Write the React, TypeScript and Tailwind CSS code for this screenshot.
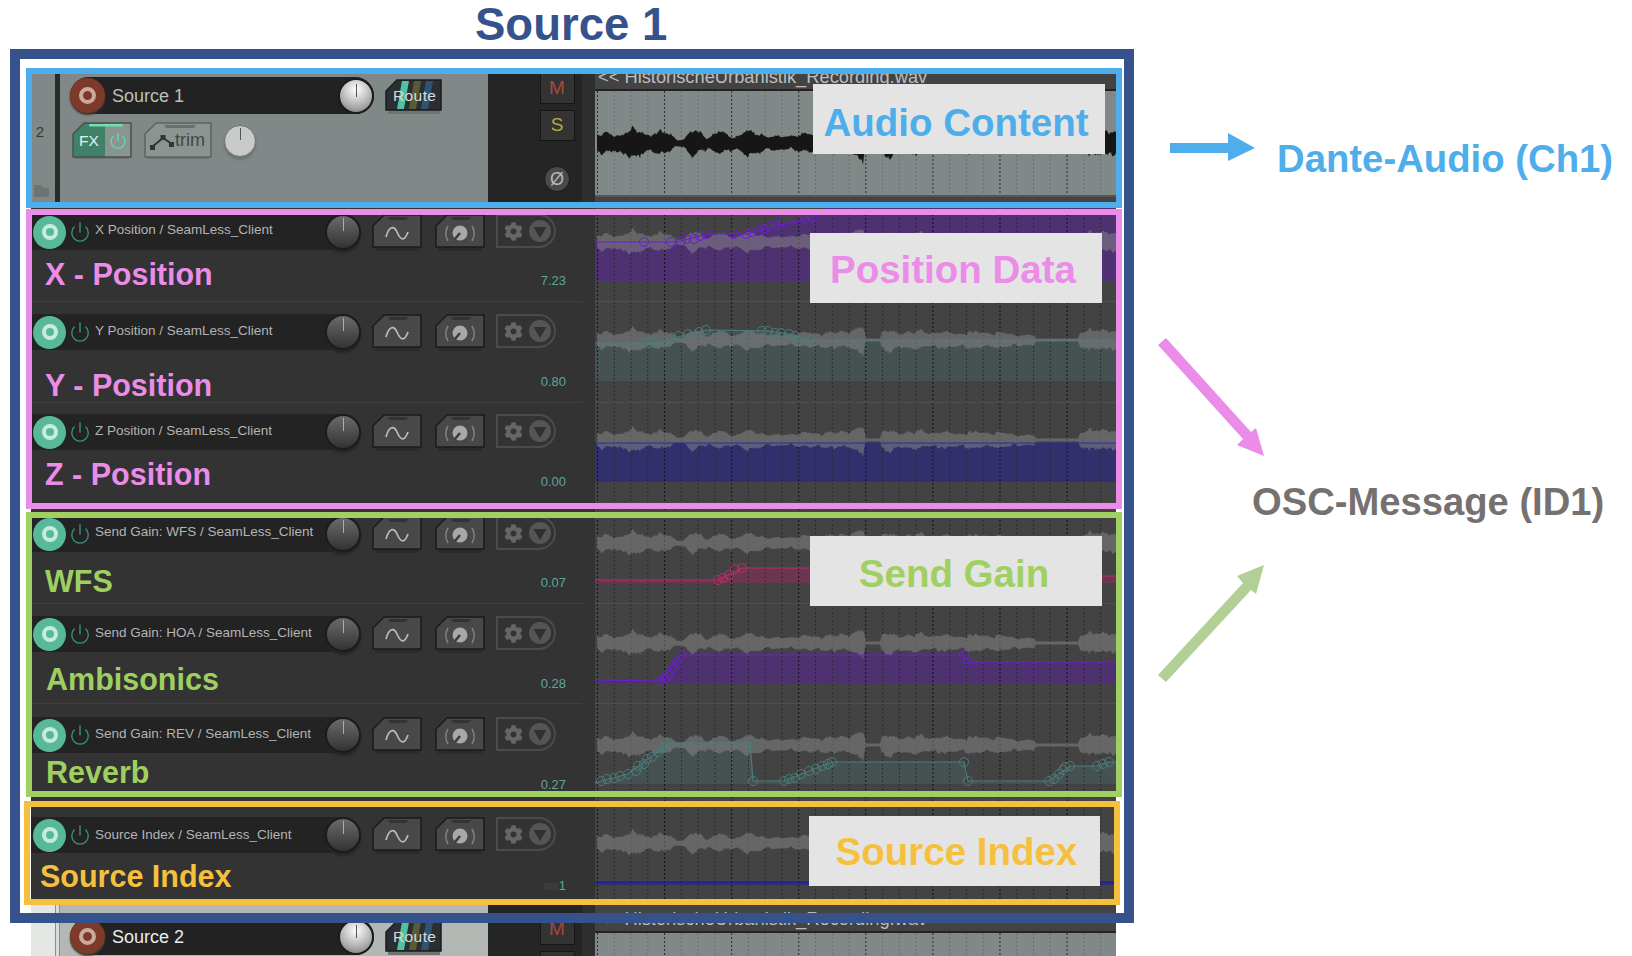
import { Power } from "lucide-react";
import { FaCog } from "react-icons/fa";

type Pt = [number, number];

const ENVELOPE: Pt[] = [
  [597, 7], [620, 9], [640, 11], [650, 7], [660, 9], [672, 7], [677, 3], [684, 3], [692, 11], [703, 9], [708, 4],
  [718, 9], [730, 8], [737, 5], [748, 11], [760, 9], [768, 5], [780, 6], [800, 7], [820, 8], [840, 9], [855, 11],
  [863, 17], [866, 1], [880, 1], [882, 11], [900, 9], [950, 8], [990, 9], [1010, 7], [1025, 6], [1034, 5], [1036, 1],
  [1078, 1], [1080, 8], [1100, 11], [1116, 9],
];

function ampAt(x: number) {
  for (let i = 1; i < ENVELOPE.length; i++) {
    const [x1, a1] = ENVELOPE[i];
    const [x0, a0] = ENVELOPE[i - 1];
    if (x <= x1) return a0 + ((a1 - a0) * (x - x0)) / (x1 - x0);
  }
  return 0;
}

function noise(x: number) {
  const v = Math.sin(x * 12.9898) * 43758.5453;
  return v - Math.floor(v);
}

// jagged look: per pixel noise mixed with a slower wobble
function jag(x: number) {
  const fine = 0.5 * noise(x) + 0.5 * noise(Math.floor(x / 4) * 4 + 7);
  const slow = 0.8 + 0.2 * Math.sin(x * 0.35) * Math.sin(x * 0.13 + 1);
  return (0.55 + 0.45 * fine) * slow;
}

function wavePath(cy: number, scale: number) {
  const top: string[] = [];
  const bottom: string[] = [];
  for (let x = 597; x <= 1116; x += 1) {
    const a = ampAt(x) * scale;
    const silent = a < 2;
    const up = silent ? a : a * jag(x);
    const down = silent ? a : a * jag(x + 31);
    top.push(`${x},${(cy - up).toFixed(1)}`);
    bottom.unshift(`${x},${(cy + down).toFixed(1)}`);
  }
  return `M${top.join(" L")} L${bottom.join(" L")} Z`;
}

const gridXs = Array.from({ length: 31 }, (_, i) => 597.5 + i * 16.77);

function Grid({ y1, y2, light }: { y1: number; y2: number; light?: boolean }) {
  return (
    <g strokeDasharray="2 2">
      {gridXs.map((x, i) => (
        <line
          key={i}
          x1={x}
          x2={x}
          y1={y1}
          y2={y2}
          stroke={i % 4 === 0 ? (light ? "#2a2a2a" : "#141414") : light ? "#696f6e" : "#2c2c2c"}
        />
      ))}
    </g>
  );
}

type LaneProps = {
  top: number;
  height: number;
  cy: number;
  line: Pt[];
  dots?: Pt[];
  stroke: string;
  fill: string;
  fillTo: number;
};

function AutomationLane({ top, height, cy, line, dots = [], stroke, fill, fillTo }: LaneProps) {
  const pts = line.map((p) => p.join(",")).join(" ");
  return (
    <svg width={521} height={height} viewBox={`595 ${top} 521 ${height}`} className="block shrink-0 bg-[#434343]">
      <polygon points={`${pts} 1116,${fillTo} 595,${fillTo}`} fill={fill} />
      <Grid y1={top} y2={top + height} />
      <path d={wavePath(cy, 1.4)} fill="#8a8a8a" opacity={0.5} />
      <line x1={595} x2={1116} y1={top + height - 0.5} y2={top + height - 0.5} stroke="#505050" />
      <polyline points={pts} fill="none" stroke={stroke} strokeWidth={1.2} />
      {dots.map(([x, y], i) => (
        <circle key={i} cx={x} cy={y} r={4.5} fill="none" stroke={stroke} strokeWidth={1} />
      ))}
    </svg>
  );
}

function AudioLane({ top, height }: { top: number; height: number }) {
  const shift = top > 500 ? 842 : 0;
  return (
    <svg width={521} height={height} viewBox={`595 ${top} 521 ${height}`} className="block shrink-0 bg-[#434343]">
      <text x={598} y={83 + shift} fontSize={18.3} fill="#bdbdbd" fontFamily="'Liberation Sans', sans-serif">
        {"<< HistorischeUrbanistik_Recording.wav"}
      </text>
      <rect x={595} y={89 + shift} width={521} height={2} fill="#222" />
      <rect x={595} y={91 + shift} width={521} height={104} fill="#808987" />
      <Grid y1={91 + shift} y2={195 + shift} light />
      <path d={wavePath(143, 1.75)} fill="#161616" />
      <rect x={595} y={195} width={521} height={2} fill="#555" />
    </svg>
  );
}

function Chamfer({ w, h, fill, stroke }: { w: number; h: number; fill: string; stroke: string }) {
  return (
    <polygon
      points={`1,${h - 1} 1,12 12,1 ${w - 1},1 ${w - 1},${h - 1}`}
      fill={fill}
      stroke={stroke}
      strokeWidth={1.5}
    />
  );
}

function WaveButton() {
  return (
    <svg width={50} height={38} viewBox="0 0 50 38" className="shrink-0">
      <rect x={3} y={33} width={44} height={4} fill="#2b2b2b" />
      <Chamfer w={50} h={34} fill="#484848" stroke="#1b1b1b" />
      <path d="M16 3h20l-2 3H18z" fill="#333" />
      <path d="M14 23c3-11 8-12 11-5s7 11 11 0" fill="none" stroke="#bcbcbc" strokeWidth={1.7} />
    </svg>
  );
}

function DialButton() {
  return (
    <svg width={50} height={38} viewBox="0 0 50 38" className="shrink-0">
      <rect x={3} y={33} width={44} height={4} fill="#2b2b2b" />
      <Chamfer w={50} h={34} fill="#484848" stroke="#1b1b1b" />
      <path d="M16 3h20l-2 3H18z" fill="#333" />
      <circle cx={25} cy={19} r={7.5} fill="#a8a8a8" />
      <line x1={25} y1={19} x2={20} y2={25} stroke="#3a3a3a" strokeWidth={2.5} />
      <path d="M13 12c-3 5-3 10 0 15M37 12c3 5 3 10 0 15" fill="none" stroke="#808080" strokeWidth={1.6} />
    </svg>
  );
}

function FxPill() {
  return (
    <div className="-ml-[2px] flex h-[34px] w-[60px] shrink-0 items-center rounded-r-full border-2 border-[#4b4b4b] pl-[6px]">
      <FaCog className="text-[19px] text-[#666666]" />
      <svg width={24} height={24} viewBox="0 0 24 24" className="ml-[5px]">
        <circle cx={12} cy={12} r={11} fill="#555555" />
        <path d="M5.5 8h13L12 19z" fill="#303030" />
      </svg>
    </div>
  );
}

type Row = {
  title: string;
  label: string;
  value: string;
  labelColor: string;
  barClass: string;
  titleClass: string;
  labelClass: string;
  valueClass: string;
  heightClass: string;
  lane: LaneProps;
};

const PINK = "text-[#ea8ce8]";
const GREEN = "text-[#9ecf60]";

const PURPLE = { stroke: "#6a1fd0", fill: "#4e3170" };
const TEAL = { stroke: "#4c7c7a", fill: "#465252" };

const rows: Row[] = [
  {
    title: "X Position / SeamLess_Client",
    label: "X - Position",
    value: "7.23",
    labelColor: PINK,
    barClass: "mt-[12px]",
    titleClass: "-mt-[4px]",
    labelClass: "mt-[5px] ml-[14px]",
    valueClass: "mt-[21px]",
    heightClass: "h-[100px]",
    lane: {
      top: 202,
      height: 100,
      cy: 242,
      ...PURPLE,
      fillTo: 281,
      line: [[595, 242], [644, 242], [671, 242], [681, 241], [706, 234], [746, 234], [812, 217], [850, 195], [1116, 195]],
      dots: [[644, 242], [671, 242], [681, 241], [686, 239], [694, 239], [700, 236], [706, 234], [734, 234], [746, 234], [751, 232], [758, 231], [764, 229], [769, 227], [776, 225], [783, 222], [796, 219], [805, 218], [812, 217]],
    },
  },
  {
    title: "Y Position / SeamLess_Client",
    label: "Y - Position",
    value: "0.80",
    labelColor: PINK,
    barClass: "mt-[12px]",
    titleClass: "-mt-[2px]",
    labelClass: "mt-[16px] ml-[14px]",
    valueClass: "mt-[22px]",
    heightClass: "h-[101px]",
    lane: {
      top: 302,
      height: 101,
      cy: 340,
      ...TEAL,
      fillTo: 381,
      line: [[595, 343], [649, 343], [664, 341], [688, 334], [706, 330], [768, 331], [789, 334], [811, 340], [1116, 340]],
      dots: [[644, 343], [649, 343], [655, 342], [664, 341], [672, 338], [679, 336], [688, 334], [699, 332], [706, 330], [762, 331], [768, 331], [775, 333], [781, 333], [789, 334], [795, 336], [801, 338], [811, 340]],
    },
  },
  {
    title: "Z Position / SeamLess_Client",
    label: "Z - Position",
    value: "0.00",
    labelColor: PINK,
    barClass: "mt-[11px]",
    titleClass: "-mt-[2px]",
    labelClass: "mt-[5px] ml-[14px]",
    valueClass: "mt-[22px]",
    heightClass: "h-[101px]",
    lane: {
      top: 403,
      height: 101,
      cy: 440,
      stroke: "#2a2aa8",
      fill: "#32306c",
      fillTo: 482,
      line: [[595, 443], [1116, 443]],
    },
  },
  {
    title: "Send Gain: WFS / SeamLess_Client",
    label: "WFS",
    value: "0.07",
    labelColor: GREEN,
    barClass: "mt-[12px]",
    titleClass: "-mt-[4px]",
    labelClass: "mt-[10px] ml-[14px]",
    valueClass: "mt-[21px]",
    heightClass: "h-[100px]",
    lane: {
      top: 504,
      height: 100,
      cy: 543,
      stroke: "#c02a6c",
      fill: "#6c3650",
      fillTo: 583,
      line: [[595, 580], [718, 580], [742, 568], [1060, 568], [1062, 576], [1116, 576]],
      dots: [[718, 580], [723, 578], [729, 575], [735, 569], [742, 568]],
    },
  },
  {
    title: "Send Gain: HOA / SeamLess_Client",
    label: "Ambisonics",
    value: "0.28",
    labelColor: GREEN,
    barClass: "mt-[12px]",
    titleClass: "-mt-[2px]",
    labelClass: "mt-[8px] ml-[15px]",
    valueClass: "mt-[22px]",
    heightClass: "h-[100px]",
    lane: {
      top: 604,
      height: 100,
      cy: 643,
      ...PURPLE,
      fillTo: 683,
      line: [[595, 680], [660, 681], [681, 655], [964, 655], [968, 662], [1116, 662]],
      dots: [[660, 681], [665, 678], [669, 675], [673, 668], [677, 662], [681, 655], [964, 655], [968, 662]],
    },
  },
  {
    title: "Send Gain: REV / SeamLess_Client",
    label: "Reverb",
    value: "0.27",
    labelColor: GREEN,
    barClass: "mt-[13px]",
    titleClass: "-mt-[2px]",
    labelClass: "mt-0 ml-[15px]",
    valueClass: "mt-[22px]",
    heightClass: "h-[101px]",
    lane: {
      top: 704,
      height: 101,
      cy: 745,
      ...TEAL,
      fillTo: 784,
      line: [[595, 783], [601, 781], [628, 774], [669, 743], [750, 742], [753, 781], [784, 781], [832, 762], [964, 762], [968, 781], [1049, 781], [1070, 766], [1097, 766], [1109, 762], [1116, 762]],
      dots: [[601, 781], [607, 779], [614, 778], [620, 776], [628, 774], [636, 771], [638, 766], [644, 764], [647, 759], [652, 757], [658, 752], [663, 748], [666, 744], [669, 743], [750, 742], [753, 781], [784, 781], [789, 779], [795, 778], [801, 774], [809, 771], [816, 769], [822, 766], [828, 764], [832, 762], [964, 762], [968, 781], [1049, 781], [1054, 779], [1059, 774], [1063, 770], [1065, 767], [1070, 766], [1097, 766], [1103, 764], [1109, 762]],
    },
  },
  {
    title: "Source Index / SeamLess_Client",
    label: "Source Index",
    value: "1",
    labelColor: "text-[#f6c03f]",
    barClass: "mt-[12px]",
    titleClass: "",
    labelClass: "mt-[4px] ml-[9px]",
    valueClass: "mt-[23px]",
    heightClass: "h-[100px]",
    lane: {
      top: 805,
      height: 100,
      cy: 843,
      stroke: "#1515c8",
      fill: "#30306a",
      fillTo: 885,
      line: [[595, 882], [1116, 882]],
    },
  },
];

function AutomationRow({ row }: { row: Row }) {
  return (
    <div className={`flex ${row.heightClass} overflow-hidden`}>
      <div className="flex w-[564px] shrink-0 bg-[#333333] pr-[13px]">
        <div className="flex min-w-0 flex-1 flex-col border-b border-[#3f3f3f]">
          <div className={`flex items-start ${row.barClass}`}>
            <div className="flex h-[36px] w-[330px] shrink-0 items-center rounded-r-full bg-[#232323] pl-[2px]">
              <div className="flex h-[33px] w-[33px] shrink-0 items-center justify-center rounded-full bg-[#58b99a]">
                <div className="h-[16px] w-[16px] rounded-full border-[4px] border-[#c6ebdf]" />
              </div>
              <Power size={22} strokeWidth={1.5} className="ml-[3px] shrink-0 text-[#3a9080]" />
              <span className={`ml-[4px] whitespace-nowrap text-[13.5px] leading-none text-[#b4b4b4] ${row.titleClass}`}>{row.title}</span>
              <div className="relative ml-auto h-[36px] w-[36px] shrink-0 rounded-full border-2 border-[#1c1c1c] bg-[linear-gradient(#6a6a6a,#333333)] shadow-[0_3px_2px_#262626]">
                <div className="absolute left-1/2 top-[2px] h-[13px] w-px bg-[#5fd0bb]" />
              </div>
            </div>
            <div className="ml-[11px] flex items-start gap-[13px]">
              <WaveButton />
              <DialButton />
              <FxPill />
            </div>
          </div>
          <div className="flex flex-1 items-start justify-between pr-[16px]">
            <span className={`${row.labelClass} ${row.labelColor} whitespace-nowrap text-[30.5px] font-bold leading-[34px]`}>
              {row.label}
            </span>
            <span className={`${row.valueClass} flex items-center text-[13px] leading-[16px] text-[#5aa898]`}>
              {row.value === "1" && <span className="mr-[1px] h-[7px] w-[14px] bg-[#3c3c3c]" />}
              {row.value}
            </span>
          </div>
        </div>
      </div>
      <AutomationLane {...row.lane} />
    </div>
  );
}

function RouteButton() {
  return (
    <div className="relative ml-[11px] mt-[2px] h-[36px] w-[57px] shrink-0">
      <svg width={57} height={36} viewBox="0 0 57 36" className="block">
        <rect x={3} y={31} width={52} height={4} fill="#6e7472" />
        <Chamfer w={57} h={32} fill="#2b2f33" stroke="#1c1c1c" />
        <path d="M12 30l5-28h7l-5 28z" fill="#4fc3a1" />
        <path d="M24 30l5-28h7l-5 28z" fill="#5a5a34" />
        <path d="M36 30l5-28h7l-5 28z" fill="#2f5370" />
      </svg>
      <span className="absolute left-[8px] top-[8px] text-[15.5px] leading-[18px] tracking-[0.4px] text-[#dadada]">Route</span>
    </div>
  );
}

function FxButton() {
  return (
    <svg width={60} height={38} viewBox="0 0 60 38" className="shrink-0">
      <rect x={3} y={34} width={54} height={3} fill="#6e7472" />
      <polygon points="1,35 1,12 12,1 33,1 33,35" fill="#3f8169" />
      <polygon points="33,1 59,1 59,35 33,35" fill="#8c9492" />
      <polygon points="1,35 1,12 12,1 59,1 59,35" fill="none" stroke="#4a5250" strokeWidth={1.5} />
      <rect x={17} y={2} width={34} height={2.5} rx={1} fill="#6fe0b0" />
      <text x={7} y={24} fontSize={15.5} fill="#e6efea" fontFamily="'Liberation Sans', sans-serif">FX</text>
      <path d="M46 11v8" stroke="#5fd8a8" strokeWidth={1.5} />
      <path d="M41.5 14a7 7 0 1 0 9 0" fill="none" stroke="#5fd8a8" strokeWidth={1.5} />
    </svg>
  );
}

function TrimButton() {
  return (
    <div className="relative ml-[12px] h-[38px] w-[68px] shrink-0">
      <svg width={68} height={38} viewBox="0 0 68 38" className="block">
        <rect x={3} y={34} width={62} height={3} fill="#6e7472" />
        <polygon points="1,35 1,12 12,1 67,1 67,35" fill="#8c9492" stroke="#5c6462" strokeWidth={1.5} />
        <path d="M20 3h32l-2 3H22z" fill="#6a7270" />
        <path d="M8 25l11-9 9 6" fill="none" stroke="#2f3634" strokeWidth={2} />
        <rect x={6} y={23} width={5} height={5} fill="#2f3634" />
        <rect x={16.5} y={13} width={5} height={5} fill="#2f3634" />
        <rect x={25} y={20} width={5} height={5} fill="#2f3634" />
      </svg>
      <span className="absolute left-[31px] top-[6px] text-[18px] leading-[24px] text-[#3f4745]">trim</span>
    </div>
  );
}

function SourceRow({ name, className, light, height, top }: { name: string; className: string; light?: boolean; height: number; top: number }) {
  return (
    <div className={`flex overflow-hidden ${className}`}>
      <div className="w-[564px] shrink-0 overflow-hidden">
        <div className={`flex h-[139px] ${top === 74 ? "-mt-[10px]" : ""}`}>
          <div className={`relative flex w-[24px] shrink-0 items-center justify-center ${light ? "bg-[#e4e6e4]" : "bg-[#808987]"}`}>
            {!light && <span className="-mt-[3px] mr-[6px] text-[15px] text-[#333a38]">2</span>}
            {!light && (
              <svg width={15} height={12} viewBox="0 0 15 12" className="absolute bottom-[6px] left-[3px]">
                <path d="M0 0h7l3 3h5v9H0z" fill="#6d7573" />
              </svg>
            )}
          </div>
          <div className={`w-[5px] shrink-0 ${light ? "border-x border-[#8a8f8d] bg-[#d8dbd9]" : "bg-[#2a2a2a]"}`} />
          <div className={`w-[428px] shrink-0 ${light ? "bg-[#b3b8b5]" : "bg-[#808987] shadow-[inset_0_-1px_#2a2a2a]"}`}>
            <div className="flex items-start pl-[10px] pt-[13px]">
              <div className="flex h-[37px] w-[304px] shrink-0 items-center rounded-full bg-[#222222]">
                <div className="flex h-[35px] w-[35px] shrink-0 items-center justify-center rounded-full bg-[#7e3a28] shadow-[0_2px_2px_#3a3a3a]">
                  <div className="h-[17px] w-[17px] rounded-full border-[4px] border-[#cba99e]" />
                </div>
                <span className={`ml-[7px] mt-[1px] text-[18px] ${light ? "text-[#ececec]" : "text-[#bcc0be]"}`}>{name}</span>
                <div className="relative ml-auto h-[36px] w-[36px] shrink-0 rounded-full border-2 border-[#1c1c1c] bg-[radial-gradient(circle_at_50%_30%,#ffffff,#a8a8a8_65%,#6e6e6e)]">
                  <div className="absolute left-1/2 top-[4px] h-[13px] w-px bg-[#555555]" />
                </div>
              </div>
              <RouteButton />
            </div>
            <div className="flex items-center pl-[12px] pt-[7px]">
              <FxButton />
              <TrimButton />
              <div className="relative ml-[12px] h-[32px] w-[32px] shrink-0 rounded-full border border-[#6c7472] bg-[#c8caca] shadow-[0_3px_2px_#6c7472]">
                <div className="absolute left-1/2 top-[2px] h-[12px] w-px bg-[#555555]" />
              </div>
            </div>
          </div>
          <div className="flex w-[94px] shrink-0 flex-col items-center bg-[#252525] pl-[48px] pr-[4px] pt-[9px]">
            <div className="flex h-[31px] w-[35px] shrink-0 items-center justify-center border border-[#151515] bg-[#333333] text-[19px] text-[#a8483c]">M</div>
            <div className="mt-[6px] flex h-[31px] w-[35px] shrink-0 items-center justify-center border border-[#151515] bg-[#333333] text-[19px] text-[#b7a845]">S</div>
            <div className="mt-[25px] flex h-[26px] w-[26px] shrink-0 items-center justify-center rounded-full border border-[#1a1a1a] bg-[#4a4a4a] text-[18px] leading-none text-[#b8b8b8]">Ø</div>
          </div>
          <div className="w-[13px] shrink-0 bg-[#2e2e2e]" />
        </div>
      </div>
      <AudioLane top={top} height={height} />
    </div>
  );
}

function Frame({ className }: { className: string }) {
  return <div className={`pointer-events-none absolute ${className}`} />;
}

function Tag({ className, text, textClass }: { className: string; text: string; textClass: string }) {
  return (
    <div className={`absolute flex h-[70px] items-center justify-center bg-[#e4e4e4] text-[38.5px] font-bold ${className} ${textClass}`}>
      {text}
    </div>
  );
}

export default function App() {
  return (
    <div className="relative h-[956px] w-[1632px] overflow-hidden bg-white font-['Liberation_Sans',Arial,sans-serif]">
      <div className="h-[74px] pl-[475px] text-[45.5px] font-bold leading-[50px] text-[#36528c]">Source 1</div>

      <div className="ml-[31px] w-[1085px]">
        <SourceRow name="Source 1" className="h-[128px]" height={128} top={74} />
        {rows.map((row) => (
          <AutomationRow key={row.title} row={row} />
        ))}
        <SourceRow name="Source 2" className="h-[51px]" height={51} top={905} light />
      </div>

      {/* annotation frames drawn over the screenshot */}
      <Frame className="left-[10px] top-[49px] h-[874px] w-[1124px] border-[10px] border-[#36528c]" />
      <Frame className="left-[26px] top-[68px] h-[140px] w-[1096px] border-[6px] border-[#4eaeeb]" />
      <Frame className="left-[26px] top-[209px] h-[300px] w-[1096px] border-[6px] border-[#ea8ce8]" />
      <Frame className="left-[26px] top-[512px] h-[285px] w-[1096px] border-[6px] border-[#a0cf62]" />
      <Frame className="left-[24px] top-[801px] h-[104px] w-[1096px] border-[6px] border-[#f6c03f]" />

      <Tag className="left-[813px] top-[84px] w-[292px] pr-[6px] pt-[8px]" text="Audio Content" textClass="text-[#4eaeeb]" />
      <Tag className="left-[810px] top-[233px] w-[292px] pr-[6px] pt-[3px]" text="Position Data" textClass="text-[#ea8ce8]" />
      <Tag className="left-[810px] top-[536px] w-[292px] pr-[4px] pt-[5px]" text="Send Gain" textClass="text-[#a0cf62]" />
      <Tag className="left-[809px] top-[816px] w-[291px] pl-[4px] pt-[1px]" text="Source Index" textClass="text-[#f6c03f]" />

      <svg width={1632} height={956} className="pointer-events-none absolute left-0 top-0">
        <polygon points="1170,143 1228,143 1228,133 1255,148 1228,161 1228,153 1170,153" fill="#4eaeeb" />
        <polygon points="1158,345 1166,338 1251,432 1256,428 1264,456 1237,445 1243,439" fill="#ea8ce8" />
        <polygon points="1158,675 1166,682 1251,590 1256,594 1264,565 1237,576 1243,583" fill="#b2d096" />
      </svg>

      <div className="absolute left-[1277px] top-[137px] text-[38.3px] font-bold leading-[44px] text-[#4eaeeb]">Dante-Audio (Ch1)</div>
      <div className="absolute left-[1252px] top-[481px] text-[38.2px] font-bold leading-[42px] text-[#757170]">OSC-Message (ID1)</div>
    </div>
  );
}
